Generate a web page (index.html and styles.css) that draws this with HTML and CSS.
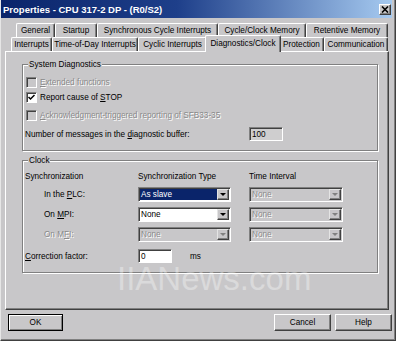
FILE: index.html
```html
<!DOCTYPE html>
<html lang="en">
<head>
  <meta charset="UTF-8">
  <meta name="viewport" content="width=device-width, initial-scale=1.0">
  <title>Properties - CPU 317-2 DP - (R0/S2)</title>
  <link rel="stylesheet" href="styles.css">
</head>
<body>
  <div class="window">
    <div class="titlebar">
      <span class="title">Properties - CPU 317-2 DP - (R0/S2)</span>
      <span class="close-btn">
        <svg width="8" height="7" viewBox="0 0 8 7"><path d="M1 0.5 L7 6.5 M7 0.5 L1 6.5" stroke="#000" stroke-width="1.6"/></svg>
      </span>
    </div>

    <!-- two rows of tabs, the selected one sits in the front row -->
    <div class="tabs">
      <div class="tab-row back">
        <div class="tab">General</div>
        <div class="tab">Startup</div>
        <div class="tab">Synchronous Cycle Interrupts</div>
        <div class="tab">Cycle/Clock Memory</div>
        <div class="tab">Retentive Memory</div>
      </div>
      <div class="tab-row front">
        <div class="tab">Interrupts</div>
        <div class="tab">Time-of-Day Interrupts</div>
        <div class="tab">Cyclic Interrupts</div>
        <div class="tab selected">Diagnostics/Clock</div>
        <div class="tab">Protection</div>
        <div class="tab">Communication</div>
      </div>
    </div>

    <div class="panel">
      <fieldset class="group diag">
        <legend>System Diagnostics</legend>
        <div class="check-row disabled">
          <span class="checkbox"></span>
          <span><u>E</u>xtended functions</span>
        </div>
        <div class="check-row">
          <span class="checkbox">
            <svg width="7" height="7" viewBox="0 0 7 7"><path d="M0.5 3 L2.5 5 L6.5 1" fill="none" stroke="#000" stroke-width="1.5"/></svg>
          </span>
          <span>Report cause of <u>S</u>TOP</span>
        </div>
        <div class="check-row disabled gap">
          <span class="checkbox"></span>
          <span><u>A</u>cknowledgment-triggered reporting of SFB33-35</span>
        </div>
        <div class="field-row">
          <span>Number of messages in the <u>d</u>iagnostic buffer:</span>
          <span class="textbox readonly">100</span>
        </div>
      </fieldset>

      <fieldset class="group clock">
        <legend>Clock</legend>
        <div class="clock-grid">
          <span>Synchronization</span>
          <span>Synchronization Type</span>
          <span>Time Interval</span>

          <span class="indent">In the <u>P</u>LC:</span>
          <div class="combo active">
            <span class="value">As slave</span>
            <span class="arrow"><i></i></span>
          </div>
          <div class="combo disabled">
            <span class="value">None</span>
            <span class="arrow"><i></i></span>
          </div>

          <span class="indent">On <u>M</u>PI:</span>
          <div class="combo">
            <span class="value">None</span>
            <span class="arrow"><i></i></span>
          </div>
          <div class="combo disabled">
            <span class="value">None</span>
            <span class="arrow"><i></i></span>
          </div>

          <span class="indent muted">On M<u>F</u>I:</span>
          <div class="combo disabled">
            <span class="value">None</span>
            <span class="arrow"><i></i></span>
          </div>
          <div class="combo disabled">
            <span class="value">None</span>
            <span class="arrow"><i></i></span>
          </div>

          <span class="corr"><u>C</u>orrection factor:</span>
          <div class="corr unit-cell">
            <span class="textbox">0</span>
            <span class="unit">ms</span>
          </div>
        </div>
      </fieldset>

      <div class="watermark">IIANews.com</div>
    </div>

    <div class="buttons">
      <button class="btn default">OK</button>
      <span class="spacer"></span>
      <button class="btn">Cancel</button>
      <button class="btn">Help</button>
    </div>
  </div>
</body>
</html>
```

FILE: styles.css
```css
body {
  margin: 0;
  background-color: #c8c7c9; /* dialog grey */
  font-family: "Liberation Sans", Arial, sans-serif;
  font-size: 8.2px;
  color: #000;
}

.window {
  width: 396px;
  height: 341px;
  box-sizing: border-box;
  border-left: 1px solid #e6e6e6;
  border-right: 1px solid #404040;
  border-bottom: 1px solid #404040;
  box-shadow: inset -1px -1px 0 #808080;
  padding: 0 3px 0 0;
  display: flex;
  flex-direction: column;
}

.titlebar {
  height: 18px;
  display: flex;
  align-items: center;
  justify-content: space-between;
  padding: 0 1px 0 2px;
  background: linear-gradient(to right, #0a246a, #1e3f8a 45%, #a6caf0);
}

.title {
  color: #fff;
  font-weight: bold;
  font-size: 9.5px;
}

.close-btn {
  width: 12px;
  height: 11px;
  box-sizing: border-box;
  display: flex;
  align-items: center;
  justify-content: center;
  background-color: #c8c7c9;
  border: 1px solid;
  border-color: #fff #404040 #404040 #fff;
  box-shadow: inset -1px -1px 0 #808080;
}

/* tabs */
.tabs {
  margin-top: 5px;
}

.tab-row {
  display: grid;
  grid-auto-rows: 14px;
}

.tab-row.back {
  margin-left: 15px;
  grid-template-columns: 39px 42px 121px 88px 82px;
}

.tab-row.front {
  margin-left: 10px;
  grid-template-columns: 41px 86px 69px 72px 45px 64px;
}

.tab {
  box-sizing: border-box;
  display: flex;
  align-items: center;
  justify-content: center;
  white-space: nowrap;
  border-top: 1px solid #fff;
  border-left: 1px solid #fff;
  border-right: 1px solid #404040;
  border-radius: 2px 2px 0 0;
  box-shadow: inset -1px 0 0 #808080;
  background-color: #c8c7c9;
}

.tab.selected {
  margin: -2px -2px -1px;
  position: relative;
  z-index: 1;
  padding-bottom: 1px;
}

/* tab page */
.panel {
  position: relative;
  margin-left: 4px;
  width: 384px;
  height: 259px;
  box-sizing: border-box;
  border: 1px solid;
  border-color: #fff #404040 #404040 #fff;
  box-shadow: inset -1px -1px 0 #808080;
  padding: 7px 0 0 16px;
  overflow: hidden;
}

.group {
  width: 356px;
  box-sizing: border-box;
  margin: 0;
  padding: 0 0 0 2px;
  border: 1px solid #808080;
  box-shadow: inset 1px 1px 0 #fff, 1px 1px 0 #fff;
}

.group legend {
  margin-left: 3px;
  padding: 0 1px;
  line-height: 11px;
  background-color: #c8c7c9;
}

.diag {
  height: 92px;
  padding-top: 5px;
}

.clock {
  margin-top: 4px !important;
  height: 118px;
  padding-top: 4px;
}

.check-row {
  display: flex;
  align-items: center;
  gap: 3px;
  height: 15px;
  margin-left: 1px;
}

.check-row.gap {
  margin-top: 3px;
}

.checkbox {
  width: 11px;
  height: 11px;
  box-sizing: border-box;
  display: flex;
  align-items: center;
  justify-content: center;
  background-color: #fff;
  border: 1px solid;
  border-color: #808080 #fff #fff #808080;
  box-shadow: inset 1px 1px 0 #404040;
}

.disabled,
.muted {
  color: #8a8a8a;
  text-shadow: 1px 1px 0 #fff;
}

.check-row.disabled .checkbox {
  background-color: #c8c7c9;
}

.field-row {
  display: grid;
  grid-template-columns: 224px 34px;
  align-items: center;
  height: 14px;
  margin-top: 4px;
}

.textbox {
  height: 14px;
  box-sizing: border-box;
  display: flex;
  align-items: center;
  padding-left: 2px;
  background-color: #fff;
  border: 1px solid;
  border-color: #808080 #fff #fff #808080;
  box-shadow: inset 1px 1px 0 #404040;
}

.textbox.readonly {
  background-color: #cfcecf;
}

/* clock section */
.clock-grid {
  display: grid;
  grid-template-columns: 95px 93px 94px;
  grid-template-rows: 12px 15px 15px 15px 14px;
  column-gap: 18px;
  row-gap: 5px;
  align-items: center;
}

.indent {
  padding-left: 19px;
}

.corr {
  margin-top: 4px;
}

.unit-cell {
  display: flex;
  align-items: center;
}

.unit-cell .textbox {
  width: 34px;
  flex: none;
}

.unit {
  margin-left: 18px;
}

.combo {
  height: 15px;
  box-sizing: border-box;
  display: flex;
  padding: 1px;
  background-color: #fff;
  border: 1px solid;
  border-color: #808080 #fff #fff #808080;
  box-shadow: inset 1px 1px 0 #404040;
}

.combo .value {
  flex: 1;
  display: flex;
  align-items: center;
  padding-left: 1px;
}

.combo.active .value {
  background-color: #0a246a;
  color: #fff;
}

.combo .arrow {
  width: 12px;
  box-sizing: border-box;
  display: flex;
  align-items: center;
  justify-content: center;
  background-color: #c8c7c9;
  border: 1px solid;
  border-color: #e4e4e4 #404040 #404040 #e4e4e4;
  box-shadow: inset -1px -1px 0 #808080;
}

.combo .arrow i {
  width: 0;
  height: 0;
  border-left: 3px solid transparent;
  border-right: 3px solid transparent;
  border-top: 3px solid #000;
}

.combo.disabled {
  background-color: #c8c7c9;
}

.combo.disabled .arrow i {
  border-top-color: #808080;
}

/* faint site watermark over the page */
.watermark {
  position: absolute;
  left: 111px;
  top: 215px;
  font-size: 33px;
  line-height: 24px;
  color: rgba(255, 255, 255, 0.35);
  white-space: nowrap;
}

/* dialog buttons */
.buttons {
  display: flex;
  gap: 4px;
  margin: 4px 0 0 7px;
}

.spacer {
  flex: 1;
}

.btn {
  width: 57px;
  height: 17px;
  padding: 0;
  font: inherit;
  color: #000;
  background-color: #c8c7c9;
  border: 1px solid;
  border-color: #fff #404040 #404040 #fff;
  box-shadow: inset -1px -1px 0 #808080;
}

.btn.default {
  width: 55px;
  border-color: #000;
  box-shadow: inset 1px 1px 0 #fff, inset -1px -1px 0 #808080;
}
```
